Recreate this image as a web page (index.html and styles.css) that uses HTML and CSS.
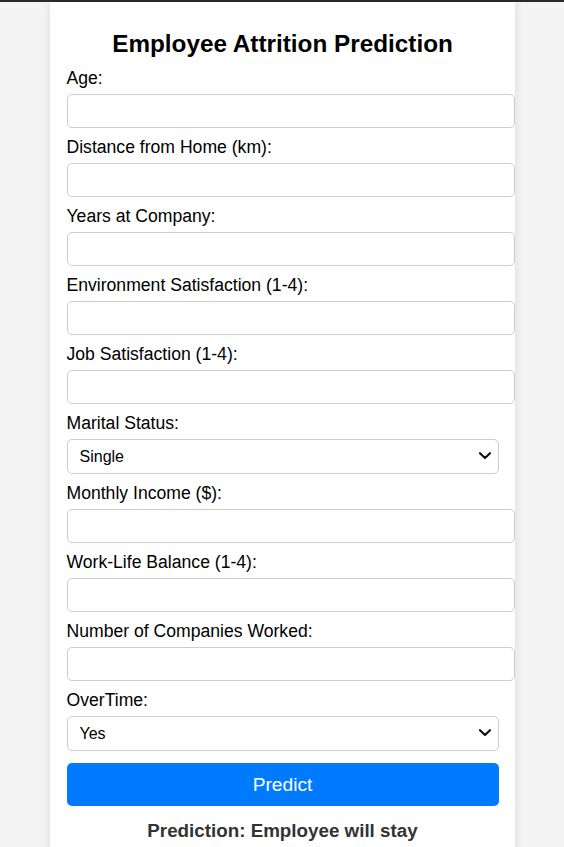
FILE: index.html
```html
<!DOCTYPE html>
<html lang="en">
<head>
<meta charset="utf-8">
<title>Employee Attrition Prediction</title>
<link rel="stylesheet" href="styles.css">
</head>
<body>
<div class="topbar"></div>
<div class="container">
  <h2 class="title">Employee Attrition Prediction</h2>
  <form class="form">
    <label class="label">Age:</label>
    <input class="input" type="text">
    <label class="label">Distance from Home (km):</label>
    <input class="input" type="text">
    <label class="label">Years at Company:</label>
    <input class="input" type="text">
    <label class="label">Environment Satisfaction (1-4):</label>
    <input class="input" type="text">
    <label class="label">Job Satisfaction (1-4):</label>
    <input class="input" type="text">
    <label class="label">Marital Status:</label>
    <div class="select-wrap">
      <select class="select">
        <option>Single</option>
        <option>Married</option>
        <option>Divorced</option>
      </select>
      <svg class="chevron" width="12" height="8" viewBox="0 0 12 8"><path d="M1 1.2 L6 6 L11 1.2" fill="none" stroke="#111" stroke-width="2.2" stroke-linecap="round" stroke-linejoin="round"/></svg>
    </div>
    <label class="label">Monthly Income ($):</label>
    <input class="input" type="text">
    <label class="label">Work-Life Balance (1-4):</label>
    <input class="input" type="text">
    <label class="label">Number of Companies Worked:</label>
    <input class="input" type="text">
    <label class="label">OverTime:</label>
    <div class="select-wrap">
      <select class="select">
        <option>Yes</option>
        <option>No</option>
      </select>
      <svg class="chevron" width="12" height="8" viewBox="0 0 12 8"><path d="M1 1.2 L6 6 L11 1.2" fill="none" stroke="#111" stroke-width="2.2" stroke-linecap="round" stroke-linejoin="round"/></svg>
    </div>
    <button class="button" type="button">Predict</button>
  </form>
  <p class="result">Prediction: Employee will stay</p>
</div>
</body>
</html>
```

FILE: styles.css
```css
html, body {
  margin: 0;
  padding: 0;
}
body {
  background: #f4f4f4;
  font-family: "Liberation Sans", Arial, sans-serif;
  color: #000;
}
.topbar {
  height: 2px;
  background: #2b2b2b;
}
.container {
  width: 432px;
  margin: 0 auto;
  padding: 28px 16px 20px 17px;
  background: #fff;
  box-shadow: 0 0 10px rgba(0, 0, 0, 0.1);
}
.title {
  margin: 0 0 11px;
  font-size: 24.3px;
  line-height: 28px;
  font-weight: bold;
  text-align: center;
}
.form {
  margin: 0;
}
.label {
  display: block;
  font-size: 17.6px;
  line-height: 19px;
  margin-bottom: 6px;
}
.input {
  display: block;
  width: 100%;
  height: 18px;
  padding: 7px;
  margin: 0 0 10px;
  border: 1px solid #ccc;
  border-radius: 5px;
  font-family: "Liberation Sans", Arial, sans-serif;
  font-size: 16px;
  background: #fff;
}
.select-wrap {
  position: relative;
  margin: 0 0 10px;
}
.select {
  display: block;
  width: 100%;
  height: 35px;
  box-sizing: border-box;
  padding: 0 12px;
  margin: 0;
  border: 1px solid #ccc;
  border-radius: 5px;
  font-family: "Liberation Sans", Arial, sans-serif;
  font-size: 16px;
  color: #000;
  background: #fff;
  appearance: none;
  -webkit-appearance: none;
}
.chevron {
  position: absolute;
  right: 8px;
  top: 13px;
  pointer-events: none;
}
.button {
  display: block;
  width: 100%;
  height: 43px;
  margin-top: 12px;
  border: none;
  border-radius: 5px;
  background: #007bff;
  color: #fff;
  font-family: "Liberation Sans", Arial, sans-serif;
  font-size: 19.2px;
}
.result {
  margin: 14px 0 0;
  font-size: 18.8px;
  line-height: 21px;
  font-weight: bold;
  color: #333;
  text-align: center;
}
```
